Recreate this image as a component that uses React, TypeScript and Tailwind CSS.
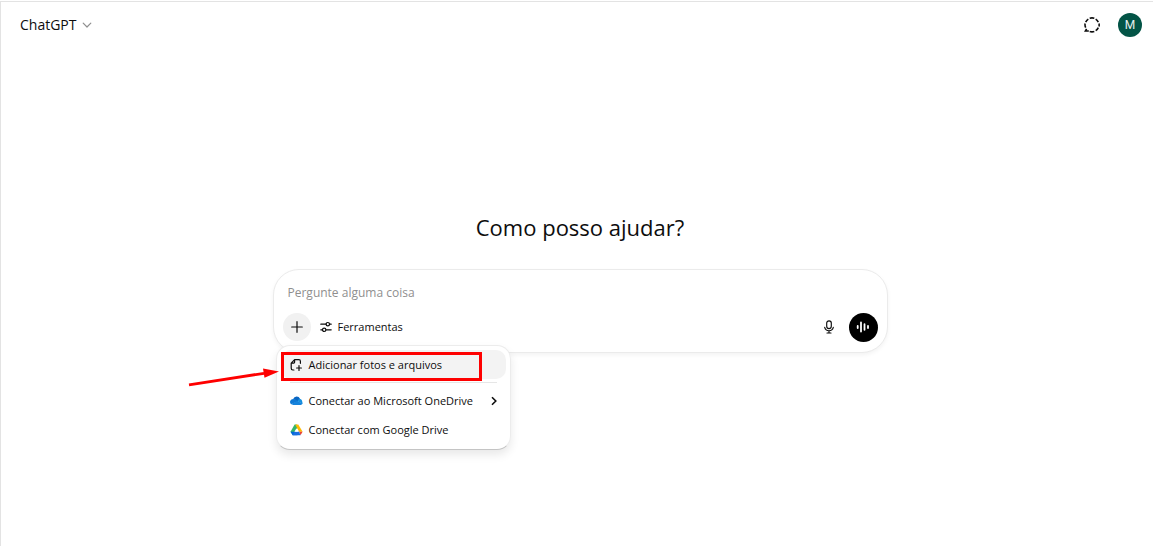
import type { ReactNode } from "react";

function ChevronDown() {
  return (
    <svg className="h-[10px] w-[10px] text-[#8f8f8f]" viewBox="0 0 10 10" fill="none" stroke="currentColor" strokeWidth="1.2" strokeLinecap="round" strokeLinejoin="round" aria-hidden="true">
      <path d="M1.2 3.2 5 7l3.8-3.8" />
    </svg>
  );
}

function ChevronRight() {
  return (
    <svg className="h-[10px] w-[8px]" viewBox="0 0 8 10" fill="none" stroke="currentColor" strokeWidth="1.6" aria-hidden="true">
      <path d="M2 1.2 5.8 5 2 8.8" />
    </svg>
  );
}

function TemporaryChatIcon() {
  return (
    <svg className="h-4 w-4" viewBox="0 0 16 16" fill="none" stroke="currentColor" strokeWidth="1.6" aria-hidden="true">
      <path d="M5.7 1.300a7 7 0 0 1 4.600 0M11.700 2.100a7 7 0 0 1 2.600 3M15 6.500a7 7 0 0 1 0 3M14.300 10.700a7 7 0 0 1-2.600 3M10.300 14.500a7 7 0 0 1-4.600 0M4.800 14H1.300l1.300-2.200M1.700 10.700A7 7 0 0 1 1.100 6.500M1.700 5.100a7 7 0 0 1 2.600-3" />
    </svg>
  );
}

function PlusIcon() {
  return (
    <svg className="h-3 w-3" viewBox="0 0 12 12" fill="none" stroke="currentColor" strokeWidth="1.2" strokeLinecap="round" aria-hidden="true">
      <path d="M6 .7v10.6M.7 6h10.6" />
    </svg>
  );
}

function SlidersIcon() {
  return (
    <svg className="h-3 w-3" viewBox="0 0 12 12" fill="none" stroke="currentColor" strokeWidth="1.2" strokeLinecap="round" aria-hidden="true">
      <path d="M.8 3.2h5.2M9.6 3.2h1.6M.8 8.8h1.6M6 8.8h5.2" />
      <circle cx="7.8" cy="3.2" r="1.7" />
      <circle cx="4.2" cy="8.8" r="1.7" />
    </svg>
  );
}

function MicIcon() {
  return (
    <svg className="h-[14px] w-[10px]" viewBox="0 0 10 14" fill="none" stroke="currentColor" strokeWidth="1.15" strokeLinecap="round" aria-hidden="true">
      <rect x="2.7" y=".8" width="4.6" height="7.8" rx="2.3" />
      <path d="M.7 7.4c.5 2 2.1 3.3 4.3 3.3s3.8-1.3 4.3-3.3M5 10.7v2.3M3 13h4" />
    </svg>
  );
}

function VoiceIcon() {
  return (
    <svg className="h-3 w-[14px]" viewBox="0 0 14 12" fill="none" stroke="currentColor" strokeWidth="1.8" strokeLinecap="round" aria-hidden="true">
      <path d="M1.700 5v2M5 1.500v9M8.500 3.200v5.600M12 5v2" />
    </svg>
  );
}

function AddFileIcon() {
  return (
    <svg className="h-3 w-3" viewBox="0 0 12 12" fill="none" stroke="currentColor" strokeWidth="1.2" strokeLinecap="round" strokeLinejoin="round" aria-hidden="true">
      <path d="M10.400 4.300V2.200c0-.9-.6-1.500-1.500-1.500H4.600L1.200 4.100v5.200c0 1 .6 1.700 1.600 1.700h1.100M4.600.9v2c0 .8-.5 1.300-1.300 1.300H1.300M9 6.600v4.800M6.600 9h4.800" />
    </svg>
  );
}

function OneDriveIcon() {
  return (
    <svg className="h-[13px] w-[13px]" viewBox="0 0 13 13" aria-hidden="true">
      <path fill="#0a66c2" d="M3.200 5A3.700 3.700 0 0 1 10 4.700L7.600 7.900 3.200 5Z" />
      <path fill="#0f78d4" d="M3.400 4.900c.8 0 1.400.2 2 .6l3 1.800-7.300 3A3.100 3.100 0 0 1 3.400 4.900Z" />
      <path fill="#1490df" d="M7.400 7.300 9 4.700c2 0 3 1.100 3.100 2.300l.6 2.700-5.300-2.400Z" />
      <path fill="#1583dc" d="m7.300 6.900 5.300 2.700c-.4.900-1.100 1.300-2 1.300H3.300c-1 0-1.700-.3-2.200-.8l6.200-3.200Z" />
    </svg>
  );
}

function GoogleDriveIcon() {
  return (
    <svg className="h-3 w-[13px]" viewBox="0 0 13 12" aria-hidden="true">
      <path fill="#34b56b" d="M4.600.5h2.100l1.400 2.600L3 11.300.5 7.800Z" />
      <path fill="#ffba00" d="M5.200.5h3.100l4.300 7.300H9.100Z" />
      <path fill="#0066da" d="M2.500 7.800h6.700l-1.800 3.500H2.700L.5 7.800Z" />
      <path fill="#ea4335" d="M9.100 7.800h3.500l-2.100 3.500Z" />
      <path fill="#1a6fe0" d="M4.400 7.800h4.700l1.400 3.500H2.600Z" />
      <path fill="#fff" d="M6.500 4.300 8.600 7.800H4.400Z" />
    </svg>
  );
}

function MenuItem({ icon, label, active, submenu }: { icon: ReactNode; label: string; active?: boolean; submenu?: boolean }) {
  return (
    <button
      type="button"
      role="menuitem"
      className={
        active
          ? "flex h-[29px] w-full items-center gap-[6px] rounded-[10px] bg-[#f3f3f3] pr-2 pl-[9px] text-left"
          : "flex h-[29px] w-full items-center gap-[6px] rounded-[10px] pr-2 pl-[9px] text-left hover:bg-[#f3f3f3]"
      }
    >
      <span className="flex w-[13px] shrink-0 justify-center">{icon}</span>
      <span className="flex-1 whitespace-nowrap">{label}</span>
      {submenu && <ChevronRight />}
    </button>
  );
}

function AttachMenu() {
  return (
    <div role="menu" className="absolute top-[75px] left-[2px] w-[235px] rounded-[14px] border border-[#ececec] border-b-[#c4c4c4] bg-white px-1 pt-1 pb-[5px] text-[11px] leading-4 shadow-[0_5px_10px_rgba(0,0,0,0.09)]">
      <MenuItem active icon={<AddFileIcon />} label="Adicionar fotos e arquivos" />
      <hr className="mx-[9px] my-[3px] border-[#e6e6e6]" />
      <MenuItem submenu icon={<OneDriveIcon />} label="Conectar ao Microsoft OneDrive" />
      <MenuItem icon={<GoogleDriveIcon />} label="Conectar com Google Drive" />
      <div className="pointer-events-none absolute top-[6px] left-1 h-[29px] w-[201px] border-[3px] border-[#fe0000]" />
      <svg className="pointer-events-none absolute top-[19px] left-[-89px] h-6 w-[92px]" viewBox="0 0 92 24" fill="#fe0000" aria-hidden="true">
        <path d="M1 19.800 76 8.300" stroke="#fe0000" strokeWidth="2.800" fill="none" />
        <path d="M75 3.500 91 6.500 76.500 12.800Z" />
      </svg>
    </div>
  );
}

function Composer() {
  return (
    <form className="relative flex h-[84px] w-full max-w-[615px] flex-col rounded-[26px] border border-[#ebebeb] bg-white px-[9px] pt-[13px] shadow-[0_2px_4px_rgba(0,0,0,0.05)]">
      <input
        aria-label="Pergunte alguma coisa"
        placeholder="Pergunte alguma coisa"
        className="h-5 px-[5px] text-[12px] leading-5 outline-none placeholder:text-[#8f8f8f]"
      />
      <div className="mt-[9px] flex h-[30px] items-center">
        <button type="button" aria-label="Adicionar" aria-expanded="true" className="flex h-7 w-7 items-center justify-center rounded-full bg-[#f1f1f1]">
          <PlusIcon />
        </button>
        <button type="button" className="ml-[9px] flex items-center gap-[6px] text-[11px] leading-4">
          <SlidersIcon />
          Ferramentas
        </button>
        <button type="button" aria-label="Ditar" className="mr-[15px] ml-auto">
          <MicIcon />
        </button>
        <button type="button" aria-label="Modo de voz" className="flex h-[29px] w-[29px] items-center justify-center rounded-full bg-black text-white">
          <VoiceIcon />
        </button>
      </div>
      <AttachMenu />
    </form>
  );
}

export default function App() {
  return (
    <div className="min-h-screen bg-white pt-px font-['Open_Sans','Noto_Sans',sans-serif] text-[#0d0d0d]">
      <div className="min-h-[calc(100vh-1px)] border-t border-l border-[#e3e3e3]">
        <header className="flex h-[46px] items-center justify-between pr-[11px] pl-[19px]">
          <button type="button" className="flex items-center gap-[5px] text-[14px] leading-5">
            ChatGPT
            <ChevronDown />
          </button>
          <div className="flex items-center gap-[18px]">
            <button type="button" aria-label="Chat temporário">
              <TemporaryChatIcon />
            </button>
            <button type="button" aria-label="Conta" className="flex h-6 w-6 items-center justify-center rounded-full bg-[#035446] font-['Roboto',sans-serif] text-[12px] text-[#e6efed]">
              M
            </button>
          </div>
        </header>
        <main className="flex flex-col items-center pt-[163px] pl-[6px]">
          <h1 className="mb-[26px] text-[22px] leading-8">Como posso ajudar?</h1>
          <Composer />
        </main>
      </div>
    </div>
  );
}
